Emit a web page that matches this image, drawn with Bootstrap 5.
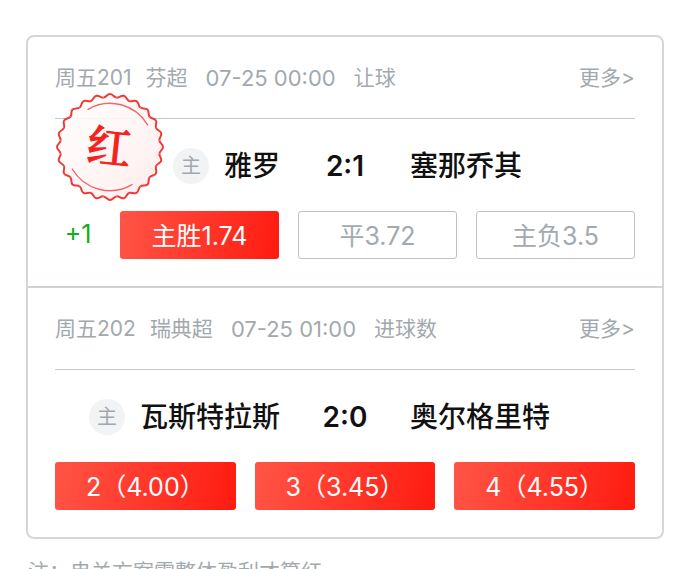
<!DOCTYPE html>
<html lang="zh-CN">
<head>
<meta charset="utf-8">
<meta name="viewport" content="width=device-width, initial-scale=1">
<title>赛事方案</title>
<link href="https://cdn.jsdelivr.net/npm/bootstrap@5.3.0/dist/css/bootstrap.min.css" rel="stylesheet">
<style>
body { font-family: Inter, "Noto Sans CJK SC", sans-serif; color: #111; background: #fff; overflow: hidden; height: 100vh; }
.plan { margin: 35px 26px 0; border: 2px solid #d3d7d9; border-radius: 8px; }
.match { padding: 27px; }
.match + .match { border-top: 2px solid #ced3d6; }
.match-head { font-size: 21px; line-height: 28px; color: #a2a9ae; padding-bottom: 26px; border-bottom: 1px solid #c2c8cb; }
.match-head a { color: inherit; }
.meta-gap { gap: 18px; }
.id-gap { gap: 14px; }
.kickoff { font-size: 22px; }
.teams { display: grid; grid-template-columns: 1fr 130px 1fr; font-size: 28px; line-height: 36px; font-weight: 500; padding: 29px 0 27px; }
.score { font-weight: 600; }
.host { width: 36px; height: 36px; border-radius: 50%; background: #f2f3f4; color: #a2a9ae; font-size: 20px; font-weight: 400; margin-right: 15px; }
.odds { gap: 19px; }
.handicap { width: 46px; color: #16ac1e; font-size: 25px; line-height: 46px; }
.pick { flex: 1 1 0; height: 48px; padding: 0; font-size: 25px; line-height: 48px; border: 1px solid #bbc4c7; border-radius: 3px; color: #a2a9ae; background: #fff; }
.pick.hit { color: #fff; border-color: transparent; background: linear-gradient(100deg, #ff5546, #ff1b10) border-box; }
.seal { left: 27px; top: 55px; width: 110px; height: 110px; }
.seal text { font-family: "Noto Serif CJK SC", "Noto Sans CJK SC", serif; font-size: 44px; font-weight: 500; }
.note { margin: 18px 28px 0; font-size: 21px; line-height: 30px; color: #a2a9ae; }
</style>
<script src="https://cdn.jsdelivr.net/npm/bootstrap@5.3.0/dist/js/bootstrap.bundle.min.js"></script>
</head>
<body>
<main class="plan">
  <section class="match position-relative">
    <div class="match-head d-flex justify-content-between">
      <div class="d-flex meta-gap"><span class="d-flex id-gap"><span>周五201</span><span>芬超</span></span><span class="kickoff">07-25 00:00</span><span>让球</span></div>
      <a href="#" class="text-decoration-none">更多&gt;</a>
    </div>
    <div class="teams">
      <div class="d-flex justify-content-end"><span class="host d-flex align-items-center justify-content-center">主</span>雅罗</div>
      <div class="score text-center">2:1</div>
      <div>塞那乔其</div>
    </div>
    <div class="odds d-flex">
      <span class="handicap text-center">+1</span>
      <button type="button" class="btn pick hit">主胜1.74</button>
      <button type="button" class="btn pick">平3.72</button>
      <button type="button" class="btn pick">主负3.5</button>
    </div>
    <svg class="seal position-absolute" viewBox="-55 -55 110 110" role="img" aria-label="红">
      <defs>
        <linearGradient id="sealFill" x1="0" y1="0" x2="1" y2="1"><stop offset="0" stop-color="#fff" stop-opacity=".85"/><stop offset="1" stop-color="#ffecec" stop-opacity=".95"/></linearGradient>
        <path id="lobe" d="M-6.5-49.4C-3.5-49.8-3-53 0-53S3.5-49.8 6.5-49.4"/>
        <g id="lobes2"><use href="#lobe"/><use href="#lobe" transform="rotate(15)"/></g>
        <g id="lobes4"><use href="#lobes2"/><use href="#lobes2" transform="rotate(30)"/></g>
        <g id="lobes8"><use href="#lobes4"/><use href="#lobes4" transform="rotate(60)"/></g>
      </defs>
      <circle r="51" fill="url(#sealFill)"/>
      <g fill="none" stroke="#ee3a38" stroke-width="2">
        <use href="#lobes8"/><use href="#lobes8" transform="rotate(120)"/><use href="#lobes8" transform="rotate(240)"/>
      </g>
      <g fill="none" stroke="#f0676a" stroke-width="1.4" stroke-linecap="round">
        <path d="M-22-37.7A43.6 43.6 0 0 1 37.7-22"/>
        <path d="M-37.7 22A43.6 43.6 0 0 0 22 37.7"/>
      </g>
      <text x="-1" y="16" text-anchor="middle" fill="#f5221c" stroke="#f5221c" stroke-width="1" transform="rotate(6)">红</text>
    </svg>
  </section>
  <section class="match">
    <div class="match-head d-flex justify-content-between">
      <div class="d-flex meta-gap"><span class="d-flex id-gap"><span>周五202</span><span>瑞典超</span></span><span class="kickoff">07-25 01:00</span><span>进球数</span></div>
      <a href="#" class="text-decoration-none">更多&gt;</a>
    </div>
    <div class="teams">
      <div class="d-flex justify-content-end"><span class="host d-flex align-items-center justify-content-center">主</span>瓦斯特拉斯</div>
      <div class="score text-center">2:0</div>
      <div>奥尔格里特</div>
    </div>
    <div class="odds d-flex">
      <button type="button" class="btn pick hit">2（4.00）</button>
      <button type="button" class="btn pick hit">3（3.45）</button>
      <button type="button" class="btn pick hit">4（4.55）</button>
    </div>
  </section>
</main>
<p class="note">注：串关方案需整体盈利才算红</p>
</body>
</html>
